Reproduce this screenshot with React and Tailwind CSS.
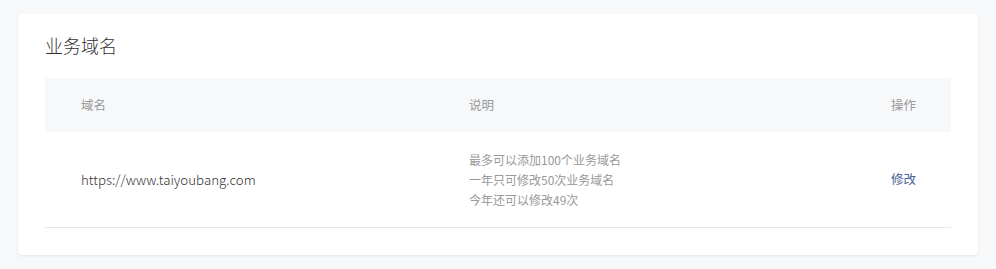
export default function App() {
  const font = { fontFamily: '"Noto Sans CJK SC", "Noto Sans", sans-serif' };
  return (
    <div className="min-h-[269px] bg-[#f7f8fa] px-[18px] pt-[14px] pb-[14px]" style={font}>
      <div className="rounded-[4px] bg-white px-[27px] pt-[18px] pb-[27px] shadow-[0_1px_3px_rgba(0,0,0,0.08)]">
        <div className="h-[27px] text-[18px] font-light leading-[27px] text-[#333]">业务域名</div>
        <div className="mt-[19px]">
          <div className="grid h-[54px] grid-cols-[424px_1fr_auto] items-center bg-[#f7f8fa] text-[12.5px] text-[#999]">
            <div className="pl-[36px]">域名</div>
            <div>说明</div>
            <div className="pr-[35px]">操作</div>
          </div>
          <div className="grid h-[96px] grid-cols-[424px_1fr_auto] items-center border-b border-[#e8e8e8]">
            <div className="pl-[36px] text-[13.3px] font-light text-[#333]">https://www.taiyoubang.com</div>
            <div className="text-[12px] leading-[20px] text-[#999]">
              <div>最多可以添加100个业务域名</div>
              <div>一年只可修改50次业务域名</div>
              <div>今年还可以修改49次</div>
            </div>
            <div className="pr-[35px] text-[12.5px]">
              <a className="cursor-pointer text-[#4a6399]">修改</a>
            </div>
          </div>
        </div>
      </div>
    </div>
  );
}
